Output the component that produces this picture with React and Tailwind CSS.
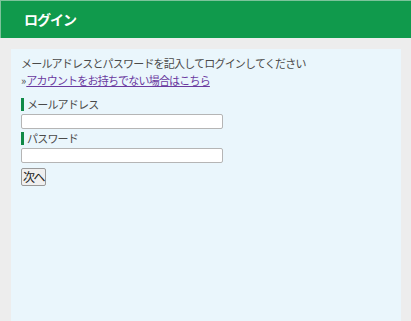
import React from 'react';

const jp = { fontFamily: '"Noto Sans CJK JP", "Noto Sans", sans-serif' };

const Field = ({ label, type }) => (
    <div>
        <div className="flex items-center h-[18px]">
            <span className="w-[3px] h-[13px] bg-[#0f8a47] mr-[3px]"></span>
            <span className="text-[11px] tracking-[-0.8px] text-[#4a4a4a]">{label}</span>
        </div>
        <input
            type={type}
            className="block w-[202px] h-[15px] bg-white border border-[#b5b5b5] rounded-[2px] mt-[1px] outline-none"
        />
    </div>
);

export default function App() {
    return (
        <div className="min-h-[321px] bg-[#ededed]" style={jp}>
            {/* ヘッダー */}
            <header className="h-[38px] bg-[#109a4c] border-t border-l border-[#7cc39a] flex items-center pl-[23px]">
                <h1 className="text-white font-bold text-[14px] tracking-[-1px]">ログイン</h1>
            </header>

            <main className="mt-[11px] ml-[11px] mr-[10px] min-h-[272px] bg-[#eaf6fc] px-[10px] pt-[6px]">
                <p className="text-[11px] tracking-[-0.8px] text-[#4a4a4a] leading-[17px]">
                    メールアドレスとパスワードを記入してログインしてください
                </p>
                <p className="text-[11px] tracking-[-0.8px] text-[#4a4a4a] leading-[17px]">
                    <span className="tracking-normal">»</span>
                    <a href="#" className="text-[#6b3aa0] underline">アカウントをお持ちでない場合はこちら</a>
                </p>

                <div className="mt-[6px] flex flex-col">
                    <Field label="メールアドレス" type="text" />
                    <Field label="パスワード" type="password" />
                </div>

                <button className="mt-[4px] h-[18px] px-[1px] text-[12px] tracking-[-1.5px] text-[#222] bg-[#efefef] border border-[#999] rounded-[2px] leading-none">
                    次へ
                </button>
            </main>
        </div>
    );
}
